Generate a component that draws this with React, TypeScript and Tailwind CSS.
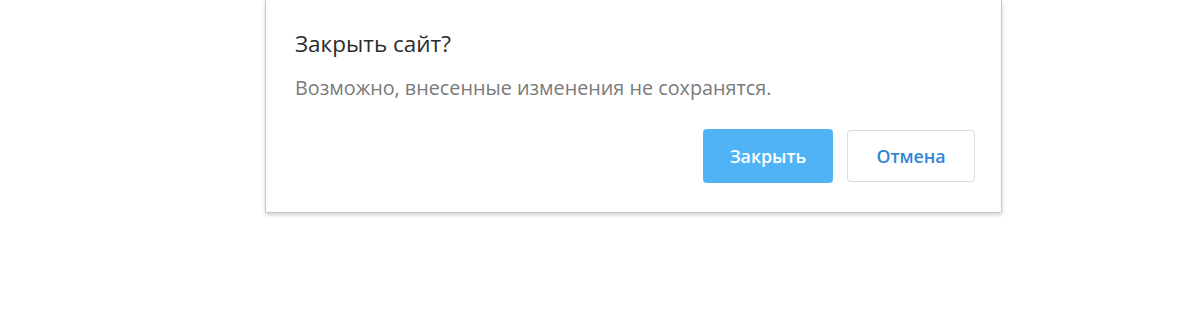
export default function App() {
  return (
    <div className="w-[1200px] h-[315px] bg-white" style={{ fontFamily: '"Open Sans", "Noto Sans", sans-serif' }}>
      <div className="ml-[265px] w-[737px] h-[213px] bg-white border border-t-0 border-[#c9c9c9] rounded-b-[2px] shadow-[0_2px_4px_rgba(0,0,0,0.18)] flex flex-col pl-[29px] pr-[26px] pt-[29px]">
        <h2 className="text-[22.5px] leading-[30px] text-[#2b2b2b]">Закрыть сайт?</h2>
        <p className="mt-[15px] text-[19.8px] leading-[28px] text-[#7a7a7a]">
          Возможно, внесенные изменения не сохранятся.
        </p>
        <div className="mt-[27px] flex justify-end items-start gap-[14px]">
          <button className="w-[130px] h-[54px] rounded-[4px] bg-[#4fb3f6] text-white text-[17.8px] font-semibold">
            Закрыть
          </button>
          <button className="w-[128px] h-[52px] mt-[1px] rounded-[4px] bg-white border border-[#dcdcdc] text-[#2f86d9] text-[17.8px] font-semibold">
            Отмена
          </button>
        </div>
      </div>
    </div>
  );
}
